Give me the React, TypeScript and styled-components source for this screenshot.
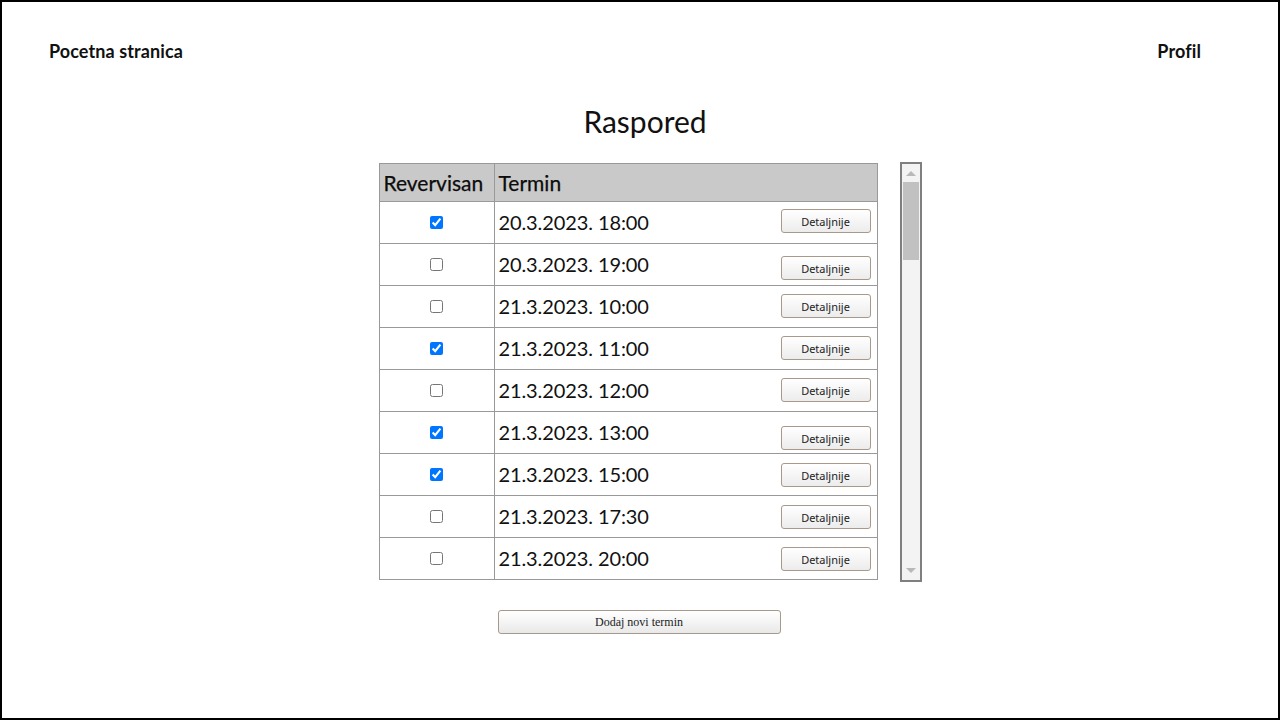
import React from "react";
import styled, { createGlobalStyle } from "styled-components";

const Global = createGlobalStyle`
  html, body { margin: 0; padding: 0; background: #fff; }
  body { font-family: Lato, "Noto Sans", sans-serif; color: #111; }
  * { box-sizing: border-box; }
`;

const Frame = styled.div`
  width: 1280px;
  height: 720px;
  border: 2px solid #000;
  display: flex;
  flex-direction: column;
`;

const Nav = styled.nav`
  display: flex;
  justify-content: space-between;
  align-items: center;
  height: 98px;
  padding: 0 77px 0 47px;
`;

const NavLink = styled.a`
  font-family: Lato, sans-serif;
  font-size: 18px;
  font-weight: 700;
  letter-spacing: 0.1px;
  color: #111;
  text-decoration: none;
`;

const Title = styled.h1`
  margin: 0;
  font-family: Lato, sans-serif;
  font-weight: 400;
  font-size: 30px;
  text-align: center;
  padding-left: 10px;
  padding-top: 1px;
  line-height: 40px;
  height: 52px;
`;

const Content = styled.div`
  display: flex;
  justify-content: center;
  align-items: flex-start;
  gap: 22px;
  padding-left: 20px;
  margin-top: 11px;
`;

const Table = styled.table`
  border-collapse: collapse;
  width: 499px;
  border: 1px solid #999;
  font-family: Lato, sans-serif;
`;

const HeadCell = styled.th<{ $w?: number }>`
  background: #c9c9c9;
  border: 1px solid #999;
  height: 38px;
  padding: 0 4px;
  text-align: left;
  font-size: 21px;
  font-weight: 400;
  color: #0c0c0c;
  -webkit-text-stroke: 0.25px #0c0c0c;
  width: ${(p) => (p.$w ? `${p.$w}px` : "auto")};
`;

const Cell = styled.td`
  border: 1px solid #999;
  height: 41px;
  padding: 0 4px;
  vertical-align: top;
`;

const CheckCell = styled(Cell)`
  vertical-align: middle;
`;

const Check = styled.input`
  display: block;
  margin: 0 auto;
  width: 13px;
  height: 13px;
`;

const TermRow = styled.div<{ $shift: number }>`
  display: flex;
  justify-content: space-between;
  align-items: flex-start;
  height: 41px;
  font-size: 20px;
  letter-spacing: -0.1px;
  padding-right: 2px;
  & > button {
    margin-top: ${(p) => p.$shift}px;
  }
`;

const DateText = styled.span`
  line-height: 41px;
`;

const SmallButton = styled.button`
  width: 90px;
  height: 24px;
  border: 1px solid #a8998a;
  border-radius: 3px;
  background: linear-gradient(#ffffff, #ececec);
  font-family: "Noto Sans", Lato, sans-serif;
  font-size: 11px;
  color: #222;
  padding: 0;
`;

const Scrollbar = styled.div`
  width: 22px;
  height: 420px;
  margin-top: -1px;
  border: 2px solid #7f7f7f;
  background: #f3f3f3;
  display: flex;
  flex-direction: column;
  padding: 1px;
`;

const Arrow = styled.div<{ $down?: boolean }>`
  height: 17px;
  display: flex;
  align-items: center;
  justify-content: center;
  margin-top: ${(p) => (p.$down ? "auto" : "0")};
  &::after {
    content: "";
    border-left: 5px solid transparent;
    border-right: 5px solid transparent;
    ${(p) =>
      p.$down
        ? "border-top: 5px solid #b8b8b8;"
        : "border-bottom: 5px solid #b8b8b8;"}
  }
`;

const Thumb = styled.div`
  height: 78px;
  background: #c1c1c1;
`;

const Footer = styled.div`
  display: flex;
  justify-content: center;
  margin-top: 28px;
  padding-right: 2px;
`;

const AddButton = styled.button`
  width: 283px;
  height: 24px;
  border: 1px solid #a8998a;
  border-radius: 3px;
  background: linear-gradient(#ffffff, #e9e9e9);
  font-family: "Liberation Serif", serif;
  font-size: 12px;
  color: #222;
  padding: 0;
`;

const rows = [
  { date: "20.3.2023. 18:00", checked: true, shift: 7 },
  { date: "20.3.2023. 19:00", checked: false, shift: 12 },
  { date: "21.3.2023. 10:00", checked: false, shift: 8 },
  { date: "21.3.2023. 11:00", checked: true, shift: 8 },
  { date: "21.3.2023. 12:00", checked: false, shift: 8 },
  { date: "21.3.2023. 13:00", checked: true, shift: 14 },
  { date: "21.3.2023. 15:00", checked: true, shift: 9 },
  { date: "21.3.2023. 17:30", checked: false, shift: 9 },
  { date: "21.3.2023. 20:00", checked: false, shift: 9 },
];

export default function App() {
  return (
    <>
      <Global />
      <Frame>
        <Nav>
          <NavLink>Pocetna stranica</NavLink>
          <NavLink>Profil</NavLink>
        </Nav>
        <Title>Raspored</Title>
        <Content>
          <Table>
            <thead>
              <tr>
                <HeadCell $w={115}>Revervisan</HeadCell>
                <HeadCell>Termin</HeadCell>
              </tr>
            </thead>
            <tbody>
              {rows.map((r) => (
                <tr key={r.date}>
                  <CheckCell>
                    <Check type="checkbox" defaultChecked={r.checked} />
                  </CheckCell>
                  <Cell>
                    <TermRow $shift={r.shift}>
                      <DateText>{r.date}</DateText>
                      <SmallButton>Detaljnije</SmallButton>
                    </TermRow>
                  </Cell>
                </tr>
              ))}
            </tbody>
          </Table>
          <Scrollbar>
            <Arrow />
            <Thumb />
            <Arrow $down />
          </Scrollbar>
        </Content>
        <Footer>
          <AddButton>Dodaj novi termin</AddButton>
        </Footer>
      </Frame>
    </>
  );
}
